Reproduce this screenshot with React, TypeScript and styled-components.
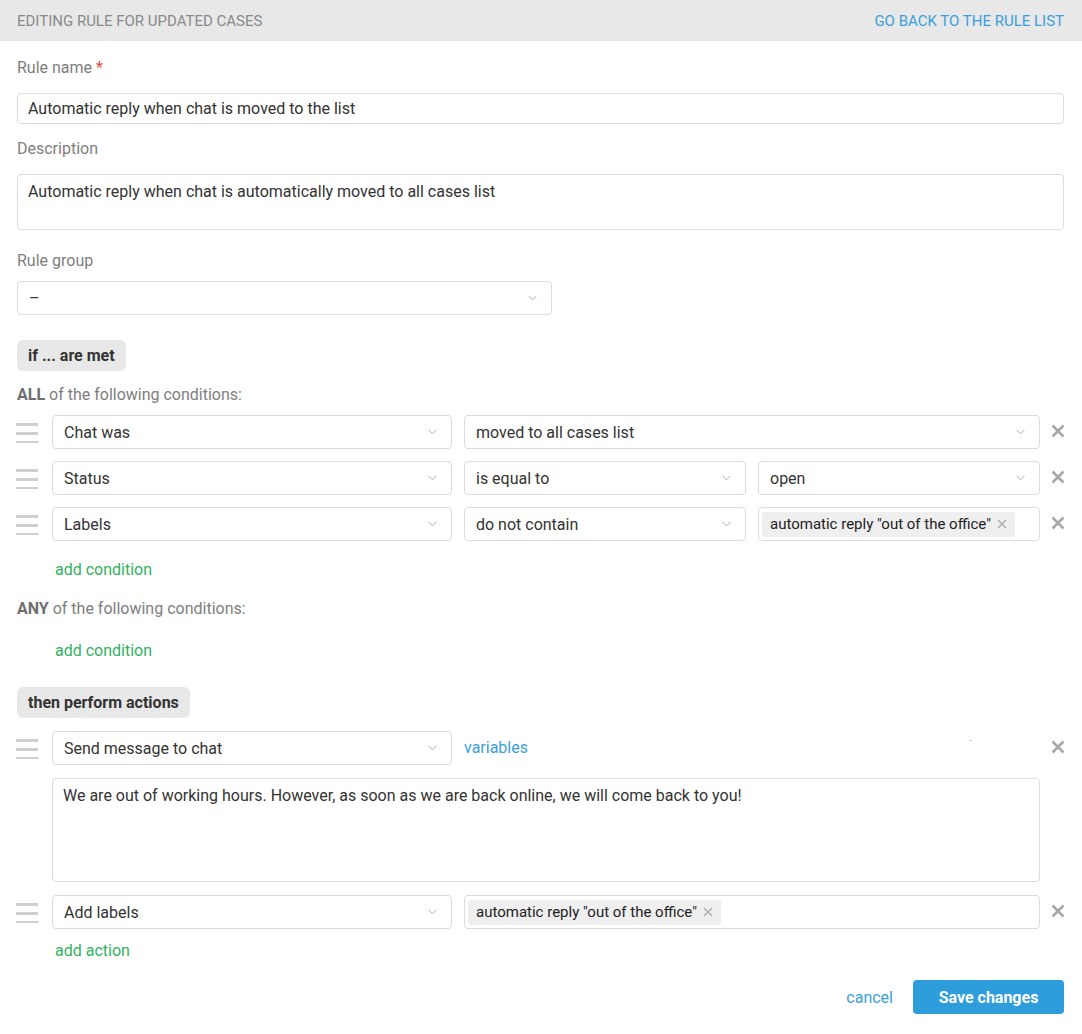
import styled, { createGlobalStyle } from 'styled-components'

const GlobalStyle = createGlobalStyle`
	body {
		margin: 0;
		background: #fff;
		font-family: Roboto, 'Liberation Sans', Arial, sans-serif;
		color: #333;
	}
	* {
		box-sizing: border-box;
	}
`

const Chevron = () => (
	<svg width="9" height="6" viewBox="0 0 9 6">
		<path d="M0.5 0.8 L4.5 4.8 L8.5 0.8" fill="none" stroke="#aaa" strokeWidth="1" />
	</svg>
)

const Cross = () => (
	<svg width="14" height="14" viewBox="0 0 14 14">
		<path d="M1.5 1.5 L12.5 12.5 M12.5 1.5 L1.5 12.5" stroke="#a8a8a8" strokeWidth="2.6" />
	</svg>
)

const SmallCross = () => (
	<svg width="10" height="10" viewBox="0 0 10 10">
		<path d="M1 1 L9 9 M9 1 L1 9" stroke="#aaa" strokeWidth="1.3" />
	</svg>
)

interface SelectProps {
	value: string
	width?: number
}

const Select = ({ value, width }: SelectProps) => (
	<SelectBox $width={width}>
		<span>{value}</span>
		<Chevron />
	</SelectBox>
)

const Tag = ({ children }: { children: string }) => (
	<TagItem>
		{children}
		<SmallCross />
	</TagItem>
)

/**
 * rule editor page
 */
export default function App(): JSX.Element {
	return (
		<>
			<GlobalStyle />
			<Header>
				<Title>Editing rule for updated cases</Title>
				<BackLink>Go back to the rule list</BackLink>
			</Header>
			<Body>
				<Label $top={17}>
					Rule name <Required>*</Required>
				</Label>
				<TextInput>Automatic reply when chat is moved to the list</TextInput>
				<Label $top={15}>Description</Label>
				<TextArea $height={56}>
					Automatic reply when chat is automatically moved to all cases list
				</TextArea>
				<Label $top={21} $bottom={10}>
					Rule group
				</Label>
				<Select value="–" width={535} />

				<SectionChip $top={25}>if ... are met</SectionChip>
				<Label $top={14} $bottom={10}>
					<b>ALL</b> of the following conditions:
				</Label>
				<Rows>
					<Row>
						<Handle />
						<Fields>
							<Select value="Chat was" width={400} />
							<Select value="moved to all cases list" />
						</Fields>
						<Remove>
							<Cross />
						</Remove>
					</Row>
					<Row>
						<Handle />
						<Fields>
							<Select value="Status" width={400} />
							<Select value="is equal to" />
							<Select value="open" />
						</Fields>
						<Remove>
							<Cross />
						</Remove>
					</Row>
					<Row>
						<Handle />
						<Fields>
							<Select value="Labels" width={400} />
							<Select value="do not contain" />
							<TagBox>
								<Tag>automatic reply "out of the office"</Tag>
							</TagBox>
						</Fields>
						<Remove>
							<Cross />
						</Remove>
					</Row>
				</Rows>
				<AddLink $top={19}>add condition</AddLink>
				<Label $top={19}>
					<b>ANY</b> of the following conditions:
				</Label>
				<AddLink $top={22}>add condition</AddLink>

				<SectionChip $top={26}>then perform actions</SectionChip>
				<Rows $top={13}>
					<Row>
						<Handle />
						<Fields>
							<Select value="Send message to chat" width={400} />
							<Variables>variables</Variables>
							<Dot />
						</Fields>
						<Remove>
							<Cross />
						</Remove>
					</Row>
					<Indented>
						<TextArea $height={104}>
							We are out of working hours. However, as soon as we are back online, we
							will come back to you!
						</TextArea>
					</Indented>
					<Row>
						<Handle />
						<Fields>
							<Select value="Add labels" width={400} />
							<TagBox>
								<Tag>automatic reply "out of the office"</Tag>
							</TagBox>
						</Fields>
						<Remove>
							<Cross />
						</Remove>
					</Row>
				</Rows>
				<AddLink $top={12}>add action</AddLink>

				<Footer>
					<Cancel>cancel</Cancel>
					<SaveButton>Save changes</SaveButton>
				</Footer>
			</Body>
		</>
	)
}

const Header = styled.header`
	height: 41px;
	background: #e8e8e8;
	display: flex;
	align-items: center;
	justify-content: space-between;
	padding: 0 18px 0 17px;
	font-size: 15px;
	text-transform: uppercase;
`
const Title = styled.div`
	color: #8a8a8a;
`
const BackLink = styled.a`
	color: #3a9fdb;
	cursor: pointer;
`
const Body = styled.main`
	padding: 0 18px 20px 17px;
`
const Label = styled.div<{ $top?: number; $bottom?: number }>`
	font-size: 16px;
	line-height: 20px;
	color: #7e7e7e;
	margin-top: ${({ $top }) => $top ?? 0}px;
	margin-bottom: ${({ $bottom }) => $bottom ?? 15}px;
	b {
		font-weight: 700;
		color: #6e6e6e;
	}
`
const Required = styled.span`
	color: #e74c3c;
`
const TextInput = styled.div`
	height: 31px;
	border: 1px solid #dcdcdc;
	border-radius: 4px;
	padding: 0 10px;
	display: flex;
	align-items: center;
	font-size: 16px;
	color: #333;
`
const TextArea = styled.div<{ $height: number }>`
	height: ${({ $height }) => $height}px;
	border: 1px solid #dcdcdc;
	border-radius: 4px;
	padding: 7px 10px;
	font-size: 16px;
	line-height: 19px;
	color: #333;
`
const SelectBox = styled.div<{ $width?: number }>`
	height: 34px;
	${({ $width }) => ($width ? `width: ${$width}px; flex: none;` : 'flex: 1 1 0; min-width: 0;')}
	border: 1px solid #dcdcdc;
	border-radius: 4px;
	padding: 0 14px 0 11px;
	display: flex;
	align-items: center;
	justify-content: space-between;
	font-size: 16px;
	color: #333;
	background: #fff;
	span {
		padding-top: 1px;
	}
`
const SectionChip = styled.div<{ $top: number }>`
	display: inline-flex;
	align-items: center;
	height: 31px;
	padding: 0 11px;
	margin-top: ${({ $top }) => $top}px;
	border-radius: 6px;
	background: #e8e8e8;
	font-size: 16px;
	font-weight: 700;
	color: #333;
`
const Rows = styled.div<{ $top?: number }>`
	display: flex;
	flex-direction: column;
	gap: 12px;
	margin-top: ${({ $top }) => $top ?? 0}px;
`
const Row = styled.div`
	display: flex;
	align-items: center;
	height: 34px;
`
const Handle = styled.div`
	width: 35px;
	flex: none;
	height: 22px;
	background: linear-gradient(#cfcfcf, #cfcfcf) 0 2px / 22px 3px no-repeat,
		linear-gradient(#cfcfcf, #cfcfcf) 0 11px / 22px 3px no-repeat,
		linear-gradient(#cfcfcf, #cfcfcf) 0 20px / 22px 3px no-repeat;
	margin-left: -1px;
	margin-right: 1px;
`
const Fields = styled.div`
	flex: 1;
	display: flex;
	gap: 12px;
	align-items: center;
	height: 100%;
	position: relative;
`
const Remove = styled.div`
	width: 25px;
	flex: none;
	display: flex;
	justify-content: flex-end;
	margin-right: -1px;
	margin-top: -2px;
`
const TagBox = styled.div`
	flex: 1 1 0;
	min-width: 0;
	height: 34px;
	border: 1px solid #dcdcdc;
	border-radius: 4px;
	padding: 4px 22px 4px 3px;
	display: flex;
	align-items: center;
`
const TagItem = styled.span`
	display: inline-flex;
	align-items: center;
	gap: 6px;
	height: 25px;
	padding: 0 8px 0 8px;
	border-radius: 3px;
	background: #efefef;
	font-size: 15px;
	color: #222;
	white-space: nowrap;
`
const AddLink = styled.a<{ $top: number }>`
	display: block;
	margin-left: 38px;
	margin-top: ${({ $top }) => $top}px;
	font-size: 16px;
	line-height: 20px;
	color: #2fb35f;
	cursor: pointer;
`
const Variables = styled.a`
	font-size: 16px;
	color: #3a9fdb;
	cursor: pointer;
	padding-bottom: 2px;
`
const Dot = styled.span`
	position: absolute;
	left: 918px;
	top: 9px;
	width: 1px;
	height: 1px;
	background: #888;
`
const Indented = styled.div`
	padding: 1px 24px 1px 35px;
`
const Footer = styled.div`
	display: flex;
	justify-content: flex-end;
	align-items: center;
	gap: 20px;
	margin-top: 19px;
`
const Cancel = styled.a`
	font-size: 16px;
	color: #3a9fdb;
	cursor: pointer;
`
const SaveButton = styled.button`
	height: 34px;
	width: 151px;
	border: none;
	border-radius: 4px;
	background: #2d9ddc;
	color: #fff;
	font-family: inherit;
	font-size: 16px;
	font-weight: 700;
	cursor: pointer;
`
